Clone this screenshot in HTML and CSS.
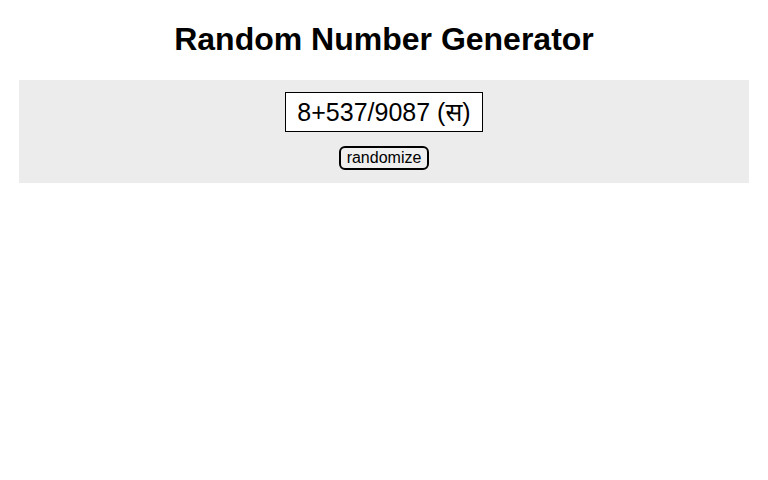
FILE: index.html
```html
<!DOCTYPE html>
<html lang="en">
<head>
    <meta charset="UTF-8">
    <meta name="viewport" content="width=device-width, initial-scale=1.0">
    <title>Random Number Generator</title>
    <link rel="stylesheet" href="styles.css">
</head>
<body>
    <h1>Random Number Generator</h1>
    <div class="panel">
        <div id="output" class="output">8+537/9087 (स)</div>
        <button type="button" class="rand-btn">randomize</button>
    </div>
</body>
</html>
```

FILE: styles.css
```css
/* Page */
body {
    font-family: "Liberation Sans", Arial, "Noto Sans", sans-serif;
    color: #000;
    background: #fff;
    margin: 0;
    padding: 0 19px;
}

h1 {
    font-size: 32px;
    text-align: center;
    margin: 0;
    padding: 21px 0 22px;
    line-height: 37px;
}

/* Grey box with the number and button */
.panel {
    background-color: #ececec;
    display: flex;
    flex-direction: column;
    align-items: center;
    padding: 12px 0 13px;
    gap: 14px;
}

.output {
    border: 1px solid #000;
    background: #fff;
    font-size: 25px;
    line-height: 38px;
    padding: 0 11px;
}

.rand-btn {
    font-family: inherit;
    font-size: 16px;
    line-height: 18px;
    padding: 1px 6px;
    border: 2px solid #000;
    border-radius: 6px;
    background: #efefef;
    color: #000;
}
```
